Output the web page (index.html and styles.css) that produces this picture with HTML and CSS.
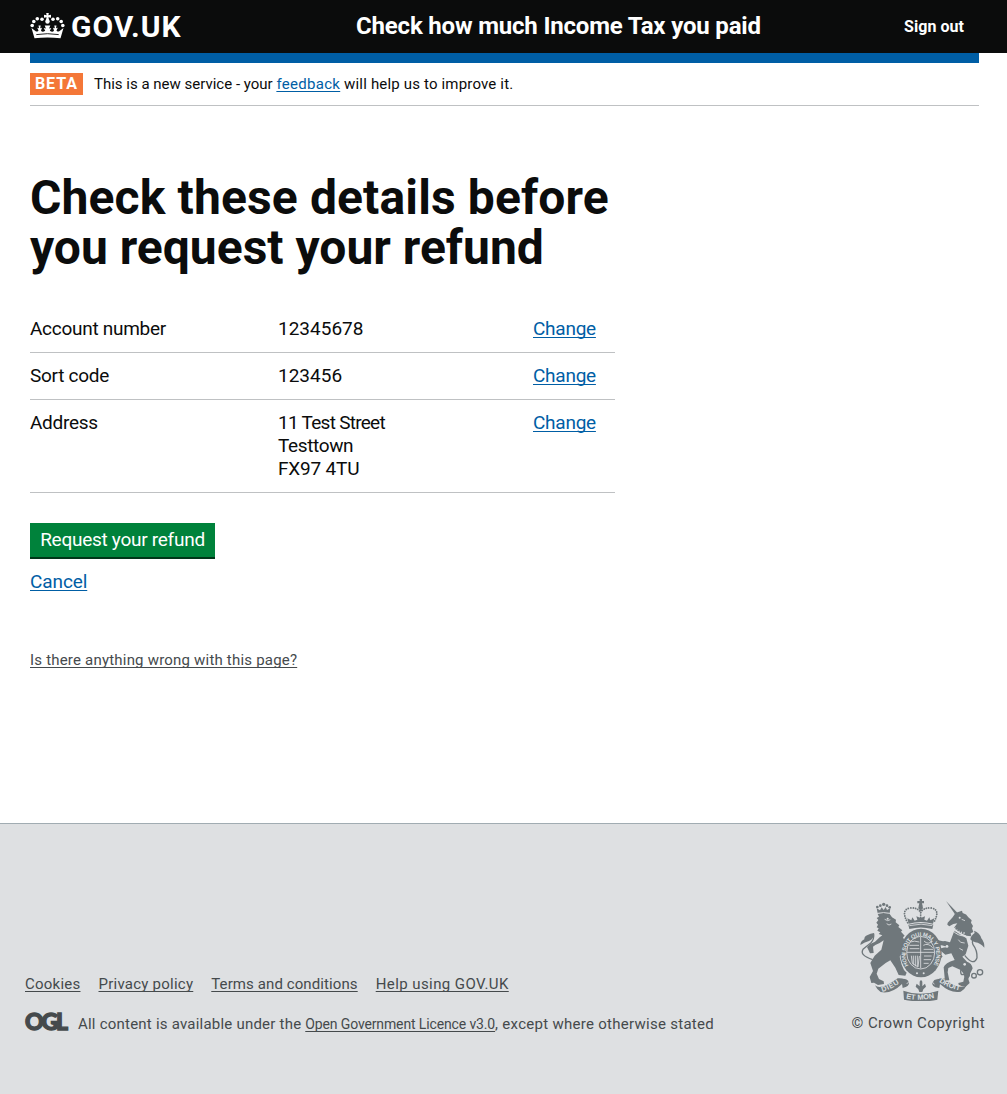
FILE: index.html
```html
<!DOCTYPE html>
<html lang="en">
<head>
<meta charset="utf-8">
<title>Check these details before you request your refund</title>
<link rel="stylesheet" href="styles.css">
</head>
<body>
<header class="header">
  <a class="brand" href="#">
    <svg class="crown" viewBox="0 0 35 27" aria-hidden="true">
      <g fill="#fff">
        <circle cx="2.200" cy="12.500" r="1.800"/><circle cx="3.800" cy="8.500" r="1.800"/><circle cx="7.300" cy="5.800" r="1.800"/><circle cx="12" cy="6.300" r="1.800"/>
        <circle cx="32.800" cy="12.500" r="1.800"/><circle cx="31.200" cy="8.500" r="1.800"/><circle cx="27.700" cy="5.800" r="1.800"/><circle cx="23" cy="6.300" r="1.800"/>
        <path d="M16.200 0h2.600l-.4 2.300 2.600-.5v3l-2.600-.5.8 3.400h-3.400l.8-3.400-2.600.5v-3l2.600.5z"/>
        <circle cx="17.500" cy="8.500" r="2.200"/>
        <path d="M4.500 25.300 1.500 15l4.200 3.200q2.200 1 2.800-.7l-1.300-2.800 1.800.5-.5-2.700h2.200l-.5 2.700 1.800-.5-1 2.800q1.300 2.500 4.200.2l-1.500-2.700 2.200.6-1.200-3h5.600l-1.200 3 2.200-.6-1.500 2.700q2.900 2.300 4.200-.2l-1-2.800 1.800.5-.5-2.700h2.200l-.5 2.700 1.800-.5-1.300 2.800q.6 1.700 2.800.7l4.200-3.200-3 10.300Q17.500 23.500 4.500 25.300z"/>
      </g>
      <path d="M6.300 21.600q11.200-1.800 22.400 0" fill="none" stroke="#0b0c0c" stroke-width=".9"/>
    </svg>
    <span class="brand-name">GOV.UK</span>
  </a>
  <span class="service">Check how much Income Tax you paid</span>
  <a class="sign-out" href="#">Sign out</a>
</header>

<main class="main">
  <div class="phase">
    <strong class="tag">BETA</strong>
    <span class="phase-text">This is a new service - your <a href="#">feedback</a><span class="phase-end"> will help us to improve it.</span></span>
  </div>
  <h1 class="title"><span class="title-lead">Check these details before</span><br>you request your refund</h1>
  <dl class="summary">
    <div class="row"><dt>Account number</dt><dd class="num">12345678</dd><dd><a class="change" href="#">Change</a></dd></div>
    <div class="row"><dt>Sort code</dt><dd class="num">123456</dd><dd><a class="change" href="#">Change</a></dd></div>
    <div class="row"><dt>Address</dt><dd><span class="street">11 Test Street</span><br><span class="town">Testtown</span><br><span class="postcode">FX97 4TU</span></dd><dd><a class="change" href="#">Change</a></dd></div>
  </dl>
  <button class="button" type="button">Request your refund</button>
  <div class="cancel"><a href="#">Cancel</a></div>
  <div class="report"><a href="#">Is there anything wrong with this page?</a></div>
</main>

<footer class="footer">
  <div class="footer-main">
    <nav class="links">
      <a href="#">Cookies</a>
      <a href="#">Privacy policy</a>
      <a class="terms" href="#">Terms and conditions</a>
      <a class="help" href="#">Help using GOV.UK</a>
    </nav>
    <div class="licence">
      <span class="ogl">OGL</span>
      <span class="licence-text">All content is available under the <a href="#">Open Government Licence v3.0</a><span class="licence-end">, except where otherwise stated</span></span>
    </div>
  </div>
  <div class="copyright">
    <svg class="crest" viewBox="60 42 375 306" aria-hidden="true">
      <defs>
        <path id="motto" d="M206 241A46 55 0 1 1 280 241"/>
        <path id="left-scroll" d="M127 321Q158 312 191 285"/>
        <path id="mid-scroll" d="M198 340Q243 350 292 336"/>
        <path id="right-scroll" d="M297 290Q326 312 370 318"/>
      </defs>
      <g class="ink">
        <!-- lion -->
        <path d="M113 87q16-6 36 0l7 10 12 7-1 8 11 9-3 5 12 10-4 4 11 12-5 5 8 18-7 20-11 20 6 24 7 16 8 8-4 9-20-2-10-22-15-22-14 8-22 17-5 15 7 16 14 7 1 8-18 3-12-7-8 1-5-18 10-18-8-24 13-22 20-18 7-28-12 8-13 6-7 5 2 19-11 1-9-19 10-9 14-7 14-13 8-6-11-4 5-5-9-5 4-7-6-3 4-8-5-6 6-8-5-6 7-4z"/>
        <path d="M61 180q1-12 12-17-1-9 10-13 8-4 19-6 0 18-15 24-12 3-26 12z"/>
        <!-- lion's crown -->
        <path d="M113 85l-3-15 10 6 5-9 6 8 6-9 4 9 10-5-2 16q-18-4-36-1z"/>
        <circle cx="112" cy="66" r="4"/><circle cx="121" cy="62" r="4"/><circle cx="131" cy="58" r="5"/><circle cx="141" cy="62" r="4"/><circle cx="149" cy="67" r="4"/>
        <!-- unicorn -->
        <path d="M318 48l34 35-7 5z"/>
        <path d="M345 86q5-5 12-6l9-3 2 7q12 3 17 13l10 9-2 7 6 10-3 7 4 11-8 4 2 9-14-2q-28-12-38-24l10-13-12 2-12 7-6-5 1-6 15-16z"/>
        <path d="M343 137l36 23 6 22-8 26-10 7 14 15q14 4 17 20l-8 17-5 15 4 12-12 11-20-2-2-9 15-4 4-20-12-15-25-11-12 5-2 13 5 24-17 1 3-9-3-31q4-13 33-22l-10-20-18 4-13-11-9 4 14 12-7 8-19-17-1-16 16 2q16-4 29-4l-21-6-15 3-11-13 10-9q11 8 26 6l15 4z"/>
        <path d="M391 163q1-11 13-19l-2-7q18 6 22 23 10 12 9 28-12-14-27-16-10-1-15-9z"/>
        <!-- royal crown -->
        <path d="M205 119q38-10 75 0l-3 13q-35-9-69 0z"/>
        <path d="M239 42h7v6h6v7h-6l2 9h-12l2-9h-6v-7h7z"/><circle cx="242" cy="68" r="7"/>
        <path d="M206 116l-4-16 12 6 3-9 7 10 8-3-3-10 13 5 13-5-2 10 8 3 7-10 3 9 12-6-4 16q-37-10-73 0z"/>
        <!-- scrolls -->
        <path d="M105 301q16 17 68-21 25-1 32 8 6 12-8 18l-9 3-2-12q-32 31-64 24-12-8-17-20z"/>
        <path d="M380 301q-20 17-70-21-26 0-30 8-9 12 6 19l12 2 2-12q33 30 62 23 13-7 18-19z"/>
        <path d="M190 317q52 19 105 0l-3 27q-48 11-100 0z"/>
        <ellipse cx="243" cy="204" rx="62" ry="73"/>
        <path d="M239 290q4-8 8 0v14l8-8 3 9-8 8-3 8h-9l-3-8-8-8 3-9 9 8z"/>
      </g>
      <g class="line">
        <path d="M98 224Q58 211 69 193q10-9 24-20 10-10 8-27"/>
        <path d="M374 211q27 34 37 7 1-22-12-39-6-15 7-17"/>
        <ellipse cx="368" cy="260" rx="6" ry="9"/><circle cx="381" cy="269" r="7"/><circle cx="402" cy="272" r="7"/><circle cx="420" cy="262" r="8"/>
      </g>
      <path class="beads" d="M203 113q-22-39 7-44 24-2 32 14 8-16 32-14 29 5 7 44M242 76v25"/>
      <g class="cut-line">
        <ellipse cx="242" cy="203" rx="42" ry="49"/>
        <path d="M201 202h83M242 156v94M188 279q34 0 12 18M298 280q-31 4-15 18M112 85q19-5 38 0M208 122q36-9 69 0"/>
        <path d="M211 171q12-5 27 0M208 181h29M209 191h29M252 168q13 13 24 0M250 181q15-8 28 7M251 193h28M214 212l3 23 17 11 4-33M220 212v27M226 212v32M232 212v31M252 213h23M251 224h22M251 235h15" stroke-width="2.5"/>
        <path d="M134 103l9 4 8-3M140 116l7 4 7-3M365 103l10 4M355 164l7 8 12 2M358 190l11 6"/>
        <path d="M338 136q15 18 40 17" stroke-width="3"/>
        <path d="M343 129q13 15 33 15" stroke-width="6" stroke-dasharray="3 5"/>
      </g>
      <g class="cut"><circle cx="143" cy="101" r="3"/><circle cx="359" cy="98" r="3"/><circle cx="231" cy="265" r="3"/><circle cx="251" cy="265" r="3"/><circle cx="312" cy="159" r="4"/><circle cx="321" cy="184" r="4"/><circle cx="386" cy="199" r="4"/><circle cx="374" cy="238" r="4"/></g>
      <g class="motto">
        <text class="motto-ring"><textPath href="#motto" textLength="226">HONI SOIT QUI MAL Y PENSE</textPath></text>
        <text><textPath href="#left-scroll" textLength="58">DIEU</textPath></text>
        <text><textPath href="#mid-scroll" textLength="86">ET MON</textPath></text>
        <text><textPath href="#right-scroll" textLength="68">DROIT</textPath></text>
      </g>
    </svg>
    <a class="crown-copy" href="#">© Crown Copyright</a>
  </div>
</footer>
</body>
</html>
```
FILE: styles.css
```css
* { box-sizing: border-box; }
body {
  margin: 0;
  min-height: 1094px;
  display: flex;
  flex-direction: column;
  font: 19px/23px Roboto, "Liberation Sans", sans-serif;
  color: #0b0c0c;
  background: #fff;
}
a { color: #005ea5; text-underline-offset: 2px; text-decoration-skip-ink: none; text-decoration-thickness: 1px; }

.header {
  height: 53px;
  padding: 0 43px 0 30px;
  display: grid;
  grid-template-columns: 326px 1fr auto;
  align-items: center;
  background: #0b0c0c;
  color: #fff;
  font-weight: 700;
}
.header a { color: #fff; text-decoration: none; }
.brand { display: flex; align-items: center; gap: 6px; }
.crown { width: 35px; height: 27px; }
.brand-name { font-size: 30px; line-height: 53px; letter-spacing: .95px; }
.service { font-size: 24px; letter-spacing: -.18px; }
.sign-out { font-size: 16px; letter-spacing: .05px; }

.main { width: 949px; margin-left: 30px; border-top: 10px solid #005ea5; flex: 1; }
.phase {
  height: 43px;
  display: flex;
  align-items: center;
  gap: 11px;
  border-bottom: 1px solid #bfc1c3;
  font-size: 15px;
}
.phase-text a { letter-spacing: .3px; }
.phase-end { letter-spacing: .17px; }
.tag {
  width: 53px;
  height: 22px;
  background: #f47738;
  color: #fff;
  font-size: 16px;
  line-height: 22px;
  letter-spacing: 1px;
  text-align: center;
}
.title { margin: 67px 0 33px; font-size: 48px; line-height: 50px; font-weight: 700; }
.title-lead { letter-spacing: .13px; }
.summary { width: 585px; margin: 0; }
.row {
  display: grid;
  grid-template-columns: 248px 255px 1fr;
  padding: 11px 0 12px;
  border-bottom: 1px solid #bfc1c3;
}
.row dt { letter-spacing: -.28px; }
.row dd { margin: 0; }
.street { letter-spacing: -.72px; }
.town { letter-spacing: -.37px; }
.postcode { letter-spacing: -.18px; }
.change { letter-spacing: -.25px; }
.button {
  display: block;
  width: 185px;
  height: 36px;
  margin: 30px 0 11px;
  padding: 0 0 2px;
  border: 0;
  border-bottom: 2px solid #003618;
  background: #00823b;
  color: #fff;
  font: inherit;
  letter-spacing: -.27px;
}
.cancel { letter-spacing: -.1px; }
.report { margin-top: 56px; font-size: 15px; letter-spacing: .2px; }
.report a { color: #454a4d; }

.footer {
  height: 271px;
  padding: 75px 22px 0 25px;
  border-top: 1px solid #a1acb2;
  display: flex;
  justify-content: space-between;
  background: #dee0e2;
  color: #454a4c;
  font-size: 15px;
}
.footer a { color: #454a4c; }
.footer-main { padding-top: 74px; }
.links { display: flex; gap: 18px; letter-spacing: .24px; }
.terms { letter-spacing: .1px; }
.help { letter-spacing: .42px; }
.licence { display: flex; gap: 10px; margin-top: 17px; letter-spacing: .22px; }
.ogl {
  width: 43px;
  font: 900 23px/16px Lato, sans-serif;
  letter-spacing: -2.2px;
  -webkit-text-stroke: 1.3px #454a4c;
  white-space: nowrap;
}
.licence-text a { font-size: 14px; letter-spacing: -.13px; }
.licence-end { letter-spacing: .28px; }
.copyright { display: flex; flex-direction: column; align-items: flex-end; }
.crest { width: 125px; height: 102px; margin-bottom: 11px; }
.copyright .crown-copy { text-decoration: none; letter-spacing: .43px; }
.ink { fill: #6f777b; }
.line { fill: none; stroke: #6f777b; stroke-width: 4; }
.beads { fill: none; stroke: #6f777b; stroke-width: 5.5; stroke-linecap: round; stroke-dasharray: .1 7; }
.cut { fill: #dee0e2; }
.cut-line { fill: none; stroke: #dee0e2; stroke-width: 2.5; }
.motto text { fill: #dee0e2; font: 700 22px "Liberation Sans", sans-serif; }
.motto .motto-ring { font-size: 17px; }
```
